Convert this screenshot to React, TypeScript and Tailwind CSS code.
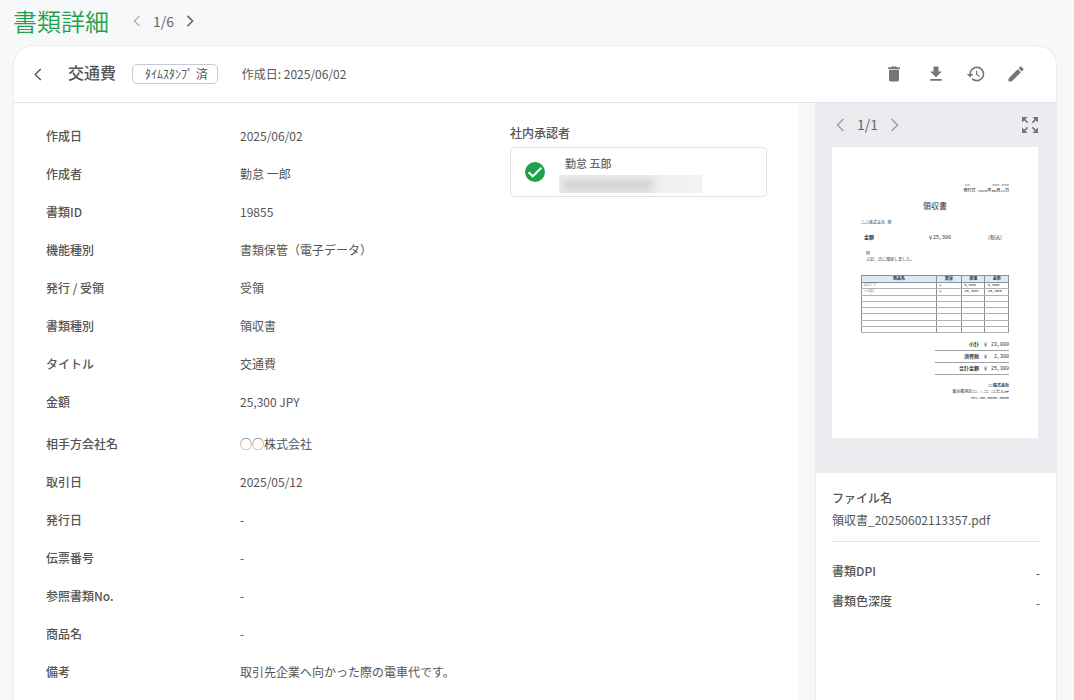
import React from "react";
import { MdDelete, MdDownload, MdEdit, MdHistory } from "react-icons/md";

const detailGroups: [string, string][][] = [
  [
    ["作成日", "2025/06/02"],
    ["作成者", "勤怠 一郎"],
    ["書類ID", "19855"],
    ["機能種別", "書類保管（電子データ）"],
    ["発行 / 受領", "受領"],
    ["書類種別", "領収書"],
    ["タイトル", "交通費"],
    ["金額", "25,300 JPY"],
  ],
  [
    ["相手方会社名", "◯◯株式会社"],
    ["取引日", "2025/05/12"],
    ["発行日", "-"],
    ["伝票番号", "-"],
    ["参照書類No.", "-"],
    ["商品名", "-"],
    ["備考", "取引先企業へ向かった際の電車代です。"],
  ],
];

const receiptRows = [
  ["□□▽▽", "1", "3,000", "3,000"],
  ["○○□□", "1", "20,000", "20,000"],
  ["", "", "", ""],
  ["", "", "", ""],
  ["", "", "", ""],
  ["", "", "", ""],
  ["", "", "", ""],
  ["", "", "", ""],
];

const receiptTotals = [
  ["小計", "￥ 23,000"],
  ["消費税", "￥  2,300"],
  ["合計金額", "￥ 25,300"],
];

function Chevron({ dir, className }: { dir: "left" | "right"; className: string }) {
  return (
    <svg viewBox="0 0 8 14" className={className} fill="none" stroke="currentColor" aria-hidden="true">
      <path d={dir === "left" ? "M7 1L1 7l6 6" : "M1 1l6 6-6 6"} />
    </svg>
  );
}

function ExpandIcon() {
  return (
    <svg viewBox="0 0 16 16" className="size-4" fill="currentColor" stroke="currentColor" aria-hidden="true">
      <path stroke="none" d="M0 0h5.500L0 5.500zM16 0v5.500L10.500 0zM0 16v-5.500L5.500 16zM16 16h-5.500L16 10.500z" />
      <path strokeWidth="1.600" d="M1.500 1.500L5.600 5.600M14.500 1.500L10.400 5.600M1.500 14.500L5.600 10.400M14.500 14.500L10.400 10.400" />
    </svg>
  );
}

function Receipt() {
  return (
    <div className="aspect-[206/291] bg-white px-[29px] pt-[35px] font-['Liberation_Mono','Noto_Sans_CJK_JP',monospace] text-[4px] leading-[6px] whitespace-pre text-[#333]">
      <div className="flex justify-end gap-5 text-[#777]">
        <span>NO.</span>
        <span>000-000</span>
      </div>
      <p className="text-right font-medium">発行日 2025年05月12日</p>
      <h2 className="mt-2 text-center text-[8px] leading-[10px]">領収書</h2>
      <p className="mt-2">△△株式会社 様</p>
      <div className="mt-[7px] flex justify-between pr-1 pl-[3px] text-[5px] leading-[10px]">
        <span className="font-bold">金額</span>
        <span className="pl-5">￥25,300</span>
        <span>（税込）</span>
      </div>
      <p className="mt-2 pl-[5px]">但</p>
      <p className="pl-[5px]">上記、正に領収しました。</p>
      <table className="mt-3 h-[58px] w-full table-fixed border-collapse text-[4px] leading-[5px]">
        <thead>
          <tr className="h-[7px] bg-[#dce9f6]">
            <th className="w-[51%] border border-[#8c8f93] p-0">商品名</th>
            <th className="w-[17%] border border-[#8c8f93] p-0">数量</th>
            <th className="w-[16%] border border-[#8c8f93] p-0">単価</th>
            <th className="w-[16%] border border-[#8c8f93] p-0">金額</th>
          </tr>
        </thead>
        <tbody>
          {receiptRows.map((row, i) => (
            <tr key={i} className="h-[6px]">
              {row.map((cell, j) => (
                <td key={j} className="border border-x-[#8c8f93] border-y-[#b0b2b4] p-0 pl-0.5">
                  {cell || "\u00a0"}
                </td>
              ))}
            </tr>
          ))}
        </tbody>
      </table>
      <div className="mt-2 ml-auto w-1/2 text-[5px]">
        {receiptTotals.map(([label, value]) => (
          <div key={label} className="mb-0.5 flex justify-end gap-1 border-b border-[#a0a2a5] pb-px leading-[8px]">
            <span className="font-bold">{label}</span>
            <span>{value}</span>
          </div>
        ))}
      </div>
      <div className="mt-2 text-right">
        <p className="font-bold">□□株式会社</p>
        <p>東京都港区□□-○-□□ □□ビル3F</p>
        <p>TEL:00-0000-0000</p>
      </div>
    </div>
  );
}

export default function App() {
  return (
    <div className="flex min-h-screen flex-col bg-[#f7f8fa] pr-[17px] pl-[13px] font-['Noto_Sans_CJK_JP',sans-serif] text-xs text-[#555]">
      <header className="flex h-[45px] items-center pb-[3px]">
        <h1 className="text-2xl font-[350] text-[#1fa14a]">書類詳細</h1>
        <nav aria-label="書類" className="ml-6 flex items-center gap-3 text-sm text-[#666]">
          <button type="button" aria-label="前の書類" className="text-[#b0b0b0]">
            <Chevron dir="left" className="h-3 w-2 stroke-[1.5]" />
          </button>
          <span>1/6</span>
          <button type="button" aria-label="次の書類">
            <Chevron dir="right" className="h-3 w-2 stroke-[1.8]" />
          </button>
        </nav>
      </header>

      <main className="flex flex-1 flex-col rounded-t-[20px] border border-b-0 border-[#e9ebee]">
        <div className="flex h-[57px] shrink-0 items-center rounded-t-[20px] border-b border-[#e1e3e8] bg-white pr-[30px] pl-5">
          <button type="button" aria-label="戻る" className="w-[34px] text-[#555]">
            <Chevron dir="left" className="h-[13px] w-2 stroke-[1.5]" />
          </button>
          <h2 className="pb-1 text-base font-medium">交通費</h2>
          <span className="ml-4 rounded-[5px] border border-[#c4cbd6] pr-[9px] pl-3 leading-[18px]">ﾀｲﾑｽﾀﾝﾌﾟ 済</span>
          <span className="ml-6">作成日: 2025/06/02</span>
          <div className="ml-auto flex gap-5 text-xl text-[#757575]">
            <button type="button" aria-label="削除" className="pr-0.5"><MdDelete /></button>
            <button type="button" aria-label="ダウンロード"><MdDownload /></button>
            <button type="button" aria-label="履歴"><MdHistory /></button>
            <button type="button" aria-label="編集"><MdEdit /></button>
          </div>
        </div>

        <div className="flex flex-1 gap-4">
          <section className="flex flex-1 bg-white pt-3.5 pr-8 pb-2 pl-8">
            <div className="flex flex-1 flex-col gap-1">
              {detailGroups.map((rows, i) => (
                <dl key={i}>
                  {rows.map(([label, value]) => (
                    <div key={label} className="flex h-[38px] items-center">
                      <dt className="w-[194px] shrink-0 font-medium">{label}</dt>
                      <dd>{value}</dd>
                    </div>
                  ))}
                </dl>
              ))}
            </div>
            <aside className="w-[257px] shrink-0 pt-2">
              <h3 className="font-medium">社内承認者</h3>
              <div className="mt-1.5 flex h-[50px] items-center rounded border border-[#e1e3e8] pl-3.5">
                <svg viewBox="0 0 20 20" className="size-5" aria-hidden="true">
                  <circle cx="10" cy="10" r="10" fill="#1fa14a" />
                  <path d="M3.600 10.200l4.200 4.100L16.400 5.700" fill="none" stroke="#fff" strokeWidth="2" />
                </svg>
                <div className="ml-3.5 pt-[3px]">
                  <p className="pl-1.5 text-[11px] leading-4 font-medium text-[#666]">勤怠 五郎</p>
                  <div className="mt-1 h-[18px] w-[143px] overflow-hidden bg-linear-to-r from-[#ececec] from-60% to-[#f4f4f4]">
                    <div className="mt-1.5 ml-1 h-2 w-[90px] rounded-full bg-[#c8c8c8] blur-xs" />
                  </div>
                </div>
              </div>
            </aside>
          </section>

          <aside className="w-[241px] shrink-0 border-l border-[#e9ebee] bg-white">
            <div className="h-[370px] bg-[#ebecf0] pr-[18px] pl-4">
              <div className="flex h-11 items-center text-sm text-[#666]">
                <nav aria-label="ページ" className="ml-1 flex items-center gap-3">
                  <button type="button" aria-label="前のページ" className="text-[#a5a5a8]">
                    <Chevron dir="left" className="h-3.5 w-[9px] stroke-[1.7]" />
                  </button>
                  <span className="pb-0.5">1/1</span>
                  <button type="button" aria-label="次のページ" className="text-[#a5a5a8]">
                    <Chevron dir="right" className="h-3.5 w-[9px] stroke-[1.7]" />
                  </button>
                </nav>
                <button type="button" aria-label="全画面表示" className="ml-auto text-[#757575]">
                  <ExpandIcon />
                </button>
              </div>
              <Receipt />
            </div>
            <div className="mx-4 border-b border-[#e1e3e8] pt-3.5 pb-2.5">
              <h3 className="leading-[22px] font-medium">ファイル名</h3>
              <p className="leading-[22px]">領収書_20250602113357.pdf</p>
            </div>
            <dl className="mx-4 mt-3.5 leading-[30px]">
              <div className="flex h-[30px] justify-between">
                <dt className="font-medium">書類DPI</dt>
                <dd className="pt-0.5">-</dd>
              </div>
              <div className="flex h-[30px] justify-between">
                <dt className="font-medium">書類色深度</dt>
                <dd className="pt-0.5">-</dd>
              </div>
            </dl>
          </aside>
        </div>
      </main>
    </div>
  );
}
